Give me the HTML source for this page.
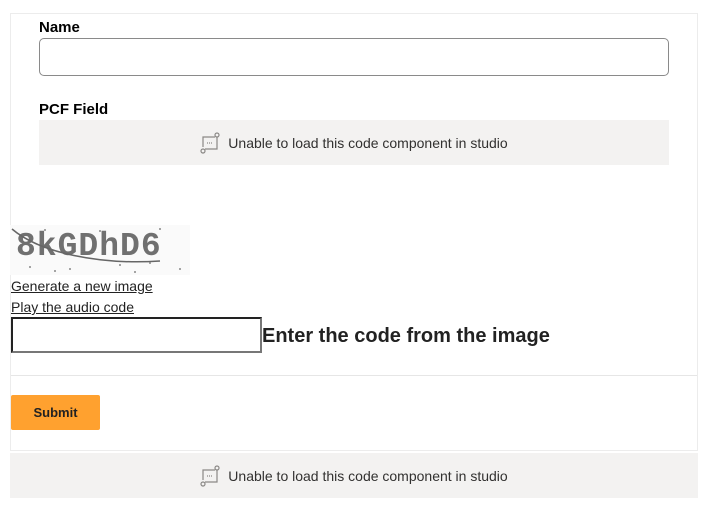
<!DOCTYPE html>
<html><head><style>
body{margin:0;background:#fff;width:707px;height:524px;position:relative;font-family:"Liberation Sans",sans-serif;overflow:hidden}
.a{position:absolute}
.lbl{font-weight:bold;font-size:15px;color:#000}
.gray{background:#f3f2f1;display:flex;align-items:center;justify-content:center;font-size:14px;color:#323130}
.gray svg{margin-right:8px}
a{color:#222;font-size:14px;text-decoration:underline}
</style></head><body>
<div class="a" style="left:10px;top:13px;width:686px;height:436px;border:1px solid #ececec"></div>
<div class="a" style="left:11px;top:375px;width:686px;height:1px;background:#e6e6e6"></div>
<div class="a lbl" style="left:39px;top:19px">Name</div>
<div class="a" style="left:39px;top:38px;width:628px;height:36px;border:1px solid #8a8a8a;border-radius:5px"></div>
<div class="a lbl" style="left:39px;top:101px">PCF Field</div>
<div class="a gray" style="left:39px;top:120px;width:630px;height:45px">
<svg width="20" height="22" viewBox="0 0 20 22" fill="none" stroke="#8a8886" stroke-width="1.2"><path d="M3 15V5h12"/><circle cx="17" cy="3" r="2"/><path d="M17 5v12H5"/><circle cx="3" cy="19" r="2"/><path d="M7 11h1M9 11h1M11 11h1"/></svg>
Unable to load this code component in studio</div>
<svg class="a" style="left:10px;top:225px" width="180" height="50" viewBox="0 0 180 50">
<rect width="180" height="50" fill="#fafafa"/>
<text x="6" y="30" font-family="Liberation Mono" font-size="33" font-weight="bold" fill="#707070" letter-spacing="1">8kGDhD6</text>
<path d="M2 4 C30 28 90 40 150 36" stroke="#666" stroke-width="1.5" fill="none"/>
<g fill="#888"><circle cx="20" cy="42" r="1"/><circle cx="60" cy="44" r="1"/><circle cx="110" cy="40" r="1"/><circle cx="140" cy="38" r="1"/><circle cx="170" cy="44" r="1"/><circle cx="35" cy="5" r="1"/><circle cx="90" cy="6" r="1"/><circle cx="150" cy="4" r="1"/><circle cx="45" cy="46" r="1"/><circle cx="125" cy="47" r="1"/></g>
</svg>
<a class="a" style="left:11px;top:278px">Generate a new image</a>
<a class="a" style="left:11px;top:299px">Play the audio code</a>
<div class="a" style="left:11px;top:317px;width:247px;height:32px;border:2px solid #222;border-right-color:#777;border-bottom-color:#777"></div>
<div class="a" style="left:262px;top:325px;font-weight:bold;font-size:20px;color:#222">Enter the code from the image</div>
<div class="a" style="left:11px;top:395px;width:89px;height:35px;background:#ffa12f;border-radius:2px;display:flex;align-items:center;justify-content:center;font-weight:bold;font-size:13px;color:#222">Submit</div>
<div class="a gray" style="left:10px;top:453px;width:688px;height:45px">
<svg width="20" height="22" viewBox="0 0 20 22" fill="none" stroke="#8a8886" stroke-width="1.2"><path d="M3 15V5h12"/><circle cx="17" cy="3" r="2"/><path d="M17 5v12H5"/><circle cx="3" cy="19" r="2"/><path d="M7 11h1M9 11h1M11 11h1"/></svg>
Unable to load this code component in studio</div>
</body></html>
